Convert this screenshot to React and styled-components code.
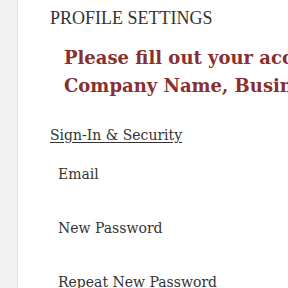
import React from "react";
import styled, { createGlobalStyle } from "styled-components";

const GlobalStyle = createGlobalStyle`
  html, body {
    margin: 0;
    padding: 0;
    background: #fff;
    overflow: hidden;
  }
`;

const Page = styled.div`
  display: flex;
  width: 288px;
  height: 288px;
  overflow: hidden;
`;

const Sidebar = styled.aside`
  flex: 0 0 17px;
  background: #f1f1f1;
  border-right: 1px solid #e4e4e4;
`;

const Main = styled.main`
  flex: 1;
  padding: 7px 0 0 32px;
  white-space: nowrap;
  color: #333;
  font-family: "DejaVu Serif", serif;
`;

const Title = styled.h1`
  margin: 0;
  font-family: "Liberation Serif", serif;
  font-weight: normal;
  font-size: 18px;
  line-height: 22px;
  color: #333;
`;

const Notice = styled.p`
  margin: 15px 0 0 14px;
  font-size: 18px;
  font-weight: bold;
  line-height: 28px;
  color: #8a2f2f;
`;

const Section = styled.h2`
  margin: 25px 0 0;
  font-size: 14px;
  font-weight: normal;
  line-height: 20px;
  text-decoration: underline;
  text-underline-offset: 2px;
`;

const Field = styled.label`
  display: block;
  margin: ${(p) => (p.$first ? "19px" : "34px")} 0 0 8px;
  font-size: 14px;
  line-height: 20px;
`;

export default function App() {
  return (
    <Page>
      <GlobalStyle />
      <Sidebar />
      <Main>
        <Title>PROFILE SETTINGS</Title>
        <Notice>
          Please fill out your account details
          <br />
          Company Name, Business Address
        </Notice>
        <Section>Sign-In &amp; Security</Section>
        <Field $first>Email</Field>
        <Field>New Password</Field>
        <Field>Repeat New Password</Field>
      </Main>
    </Page>
  );
}
